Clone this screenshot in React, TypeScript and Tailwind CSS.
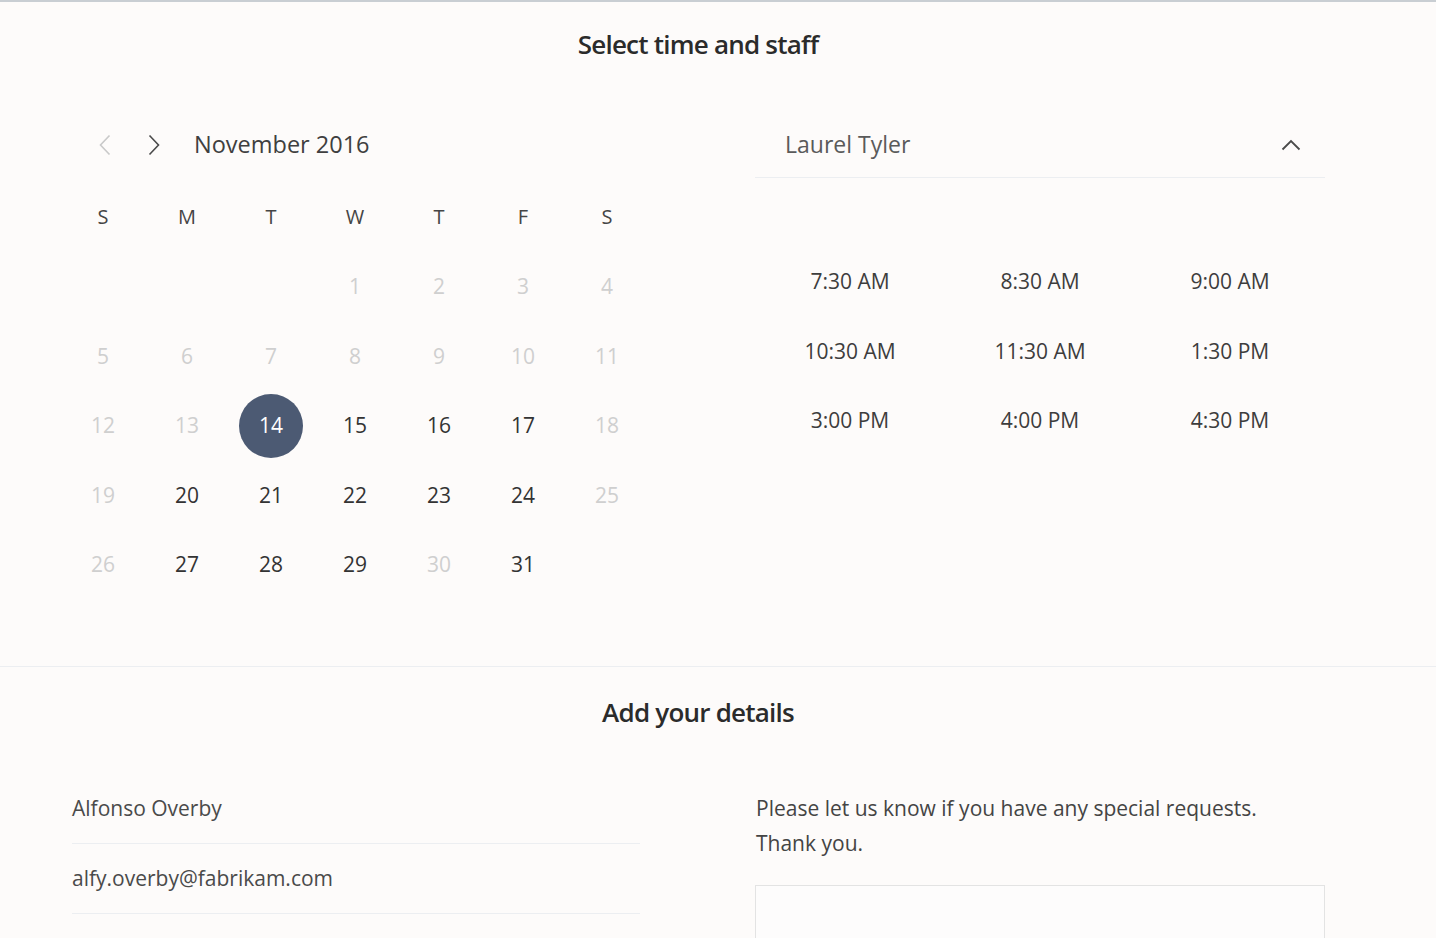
const weekdays = ['S', 'M', 'T', 'W', 'T', 'F', 'S'];

type Day = { n: number; active: boolean } | null;

const activeDays = [14, 15, 16, 17, 20, 21, 22, 23, 24, 27, 28, 29, 31];

const buildDays = (): Day[] => {
  const days: Day[] = [null, null, null];
  for (let n = 1; n <= 31; n++) {
    days.push({ n, active: activeDays.includes(n) });
  }
  return days;
};

const slots = ['7:30 AM', '8:30 AM', '9:00 AM', '10:30 AM', '11:30 AM', '1:30 PM', '3:00 PM', '4:00 PM', '4:30 PM'];

const Chevron = ({ dir, className }: { dir: 'left' | 'right' | 'up'; className?: string }) => {
  if (dir === 'up') {
    return (
      <svg width="20" height="12" viewBox="0 0 20 12" className={className} fill="none">
        <polyline points="1.5,10.5 10,2 18.5,10.5" stroke="currentColor" strokeWidth="1.8" />
      </svg>
    );
  }
  return (
    <svg width="12" height="22" viewBox="0 0 12 22" className={className} fill="none">
      <polyline
        points={dir === 'left' ? '10.5,1.5 1.5,11 10.5,20.5' : '1.5,1.5 10.5,11 1.5,20.5'}
        stroke="currentColor"
        strokeWidth="1.6"
      />
    </svg>
  );
};

const Calendar = () => {
  const days = buildDays();
  return (
    <div className="w-[588px]">
      <div className="h-[50px] flex items-center pl-[38px]">
        <Chevron dir="left" className="text-[#c9c9c9]" />
        <Chevron dir="right" className="ml-[37px] text-[#4a4a4a]" />
        <span className="ml-[34px] text-[23.5px] text-[#3f3f3f]">November 2016</span>
      </div>
      <div className="grid grid-cols-7 mt-[12px]">
        {weekdays.map((d, i) => (
          <div key={i} className="h-[70px] flex items-center justify-center text-[20px] text-[#454545]">
            {d}
          </div>
        ))}
        {days.map((d, i) => (
          <div key={i} className="h-[69.5px] flex items-center justify-center">
            {d && d.n === 14 ? (
              <span className="w-[64px] h-[64px] rounded-full bg-[#4c5a73] text-white flex items-center justify-center text-[21px]">
                14
              </span>
            ) : d ? (
              <span className={`text-[21px] ${d.active ? 'text-[#333333]' : 'text-[#cfcfcf]'}`}>{d.n}</span>
            ) : null}
          </div>
        ))}
      </div>
    </div>
  );
};

const StaffPanel = () => (
  <div className="w-[570px]">
    <div className="h-[58px] pb-[8px] border-b border-[#eceef1] flex items-center justify-between pl-[30px] pr-[24px]">
      <span className="text-[23px] text-[#5a5a5a]">Laurel Tyler</span>
      <Chevron dir="up" className="text-[#4a4a4a]" />
    </div>
    <div className="grid grid-cols-3 mt-[69px]">
      {slots.map((s) => (
        <div key={s} className="h-[69.5px] flex items-center justify-center text-[21px] text-[#3d3d3d]">
          {s}
        </div>
      ))}
    </div>
  </div>
);

export default function App() {
  return (
    <div
      className="min-h-screen bg-[#fdfbfa] border-t-2 border-[#c9ced3] overflow-hidden"
      style={{ fontFamily: '"Open Sans", "Noto Sans", sans-serif' }}
    >
      <section className="h-[665px] border-b border-[#eceef1]">
        <div className="h-[84px] flex items-center justify-center pr-[40px]">
          <h1 className="text-[26px] font-semibold text-[#2b2b2b] tracking-[-0.03em]">Select time and staff</h1>
        </div>
        <div className="flex pl-[61px] pt-[34px]">
          <Calendar />
          <div className="ml-[106px]">
            <StaffPanel />
          </div>
        </div>
      </section>
      <section>
        <div className="h-[90px] flex items-center justify-center pr-[40px]">
          <h2 className="text-[26px] font-semibold text-[#2b2b2b] tracking-[-0.03em]">Add your details</h2>
        </div>
        <div className="flex pl-[72px] pt-[17px]">
          <div className="w-[568px]">
            <div className="h-[70px] flex items-center border-b border-[#eceef1] text-[21px] text-[#4a4a4a]">
              Alfonso Overby
            </div>
            <div className="h-[70px] flex items-center border-b border-[#eceef1] text-[21px] text-[#4a4a4a]">
              alfy.overby@fabrikam.com
            </div>
          </div>
          <div className="ml-[115px] w-[570px] pt-[17px]">
            <p className="text-[21px] leading-[35px] text-[#444444] pl-[1px]">
              Please let us know if you have any special requests.
              <br />
              Thank you.
            </p>
            <div className="mt-[24px] h-[120px] border border-[#e3e3e3] bg-[#fdfcfc]" />
          </div>
        </div>
      </section>
    </div>
  );
}
